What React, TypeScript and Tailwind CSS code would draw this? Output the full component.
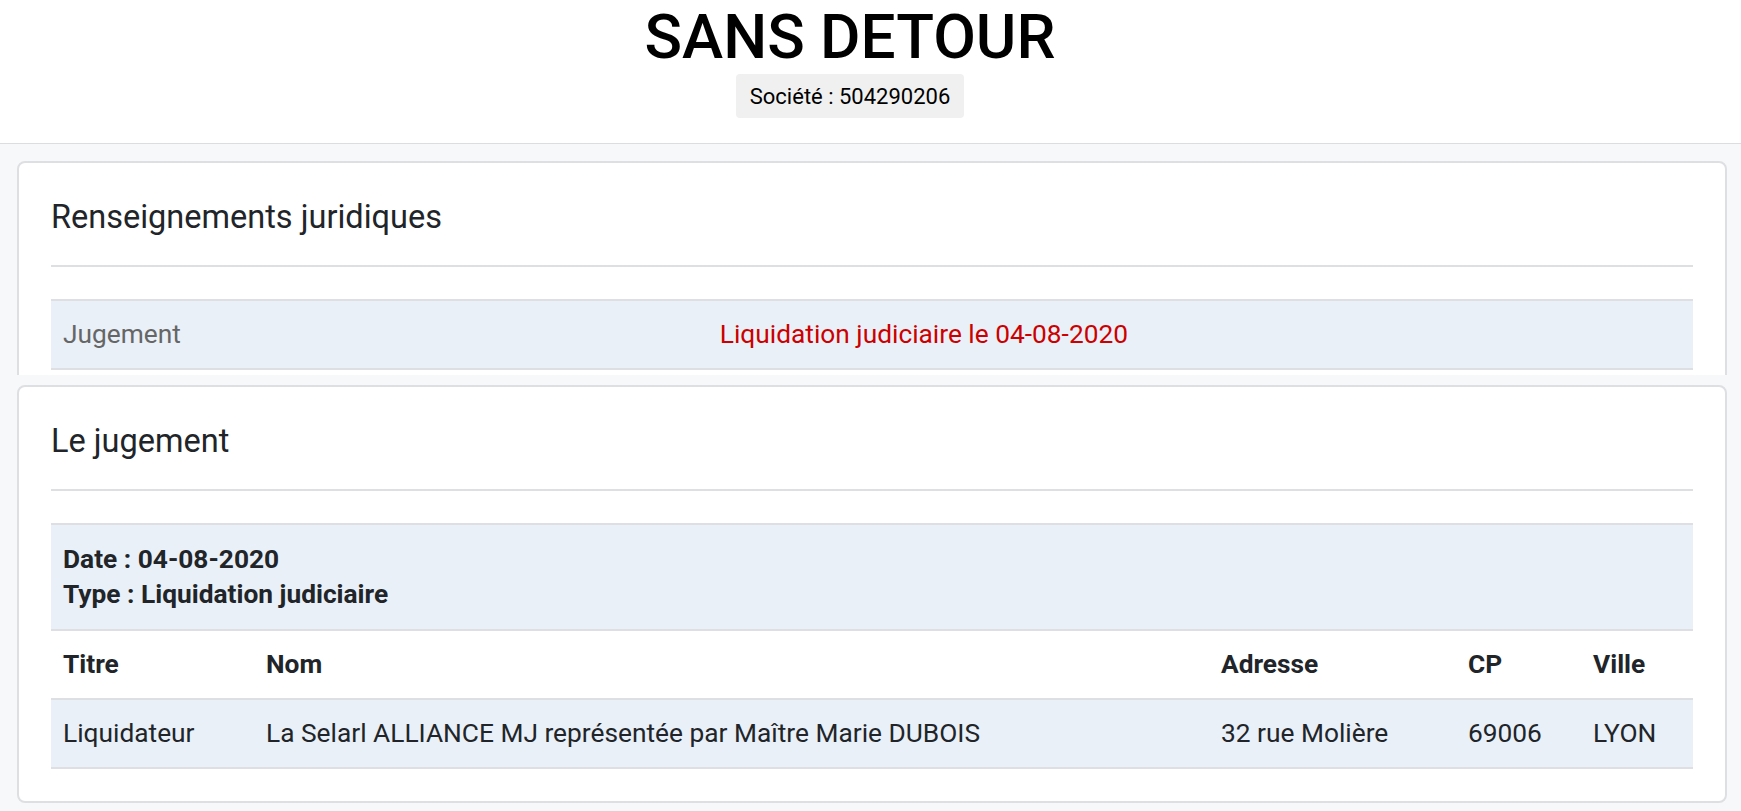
export default function App() {
  return (
    <div className="min-h-screen bg-[#f7f8fa] font-['Roboto',sans-serif] text-[#212529]">
      {/* Header */}
      <header className="h-[144px] pr-[41px] bg-white border-b border-[#dcdde0] flex flex-col items-center">
        <h1 className="text-[62px] leading-[74px] font-medium text-black">SANS DETOUR</h1>
        <div className="h-[44px] px-[14px] flex items-center bg-[#f0f0f0] rounded-[4px] text-[22px] text-black">
          Société : 504290206
        </div>
      </header>

      <main className="pl-[17px] pr-[14px] pt-[17px] pb-[8px]">
        {/* Renseignements juridiques (clipped panel) */}
        <div className="h-[214px] overflow-hidden">
          <section className="bg-white border-2 border-[#dedfe2] rounded-[8px] px-[32px] pt-[35px] pb-[32px]">
            <h2 className="text-[32.5px] leading-[38px]">Renseignements juridiques</h2>
            <hr className="mt-[29px] border-t-2 border-[#dedfe2]" />
            <table className="mt-[32px] w-full table-fixed text-[26.3px] leading-[35px]">
              <tbody>
                <tr className="bg-[#e9f0f8]">
                  <td className="w-[40%] pl-[12px] py-4 border-y-2 border-[#dedfe2] text-[#666666]">Jugement</td>
                  <td className="pl-[12px] py-4 border-y-2 border-[#dedfe2] text-[#cc0000]">
                    Liquidation judiciaire le 04-08-2020
                  </td>
                </tr>
              </tbody>
            </table>
          </section>
        </div>

        {/* Le jugement */}
        <section className="mt-[10px] bg-white border-2 border-[#dedfe2] rounded-[8px] px-[32px] pt-[35px] pb-[32px]">
          <h2 className="text-[32.5px] leading-[38px]">Le jugement</h2>
          <hr className="mt-[29px] border-t-2 border-[#dedfe2]" />
          <table className="mt-[32px] w-full table-fixed text-[26.3px] leading-[35px] text-left">
            <colgroup>
              <col className="w-[203px]" />
              <col className="w-[955px]" />
              <col className="w-[247px]" />
              <col className="w-[125px]" />
              <col />
            </colgroup>
            <tbody>
              <tr className="bg-[#e9f0f8]">
                <td colSpan={5} className="pl-[12px] py-[17px] border-y-2 border-[#dedfe2] font-bold">
                  <div>Date : 04-08-2020</div>
                  <div>Type : Liquidation judiciaire</div>
                </td>
              </tr>
              <tr>
                {['Titre', 'Nom', 'Adresse', 'CP', 'Ville'].map((h) => (
                  <th key={h} className="pl-[12px] py-4 border-b-2 border-[#dedfe2] font-bold text-left">
                    {h}
                  </th>
                ))}
              </tr>
              <tr className="bg-[#e9f0f8]">
                <td className="pl-[12px] py-4 border-b-2 border-[#dedfe2]">Liquidateur</td>
                <td className="pl-[12px] py-4 border-b-2 border-[#dedfe2]">
                  La Selarl ALLIANCE MJ représentée par Maître Marie DUBOIS
                </td>
                <td className="pl-[12px] py-4 border-b-2 border-[#dedfe2]">32 rue Molière</td>
                <td className="pl-[12px] py-4 border-b-2 border-[#dedfe2]">69006</td>
                <td className="pl-[12px] py-4 border-b-2 border-[#dedfe2]">LYON</td>
              </tr>
            </tbody>
          </table>
        </section>
      </main>
    </div>
  )
}
